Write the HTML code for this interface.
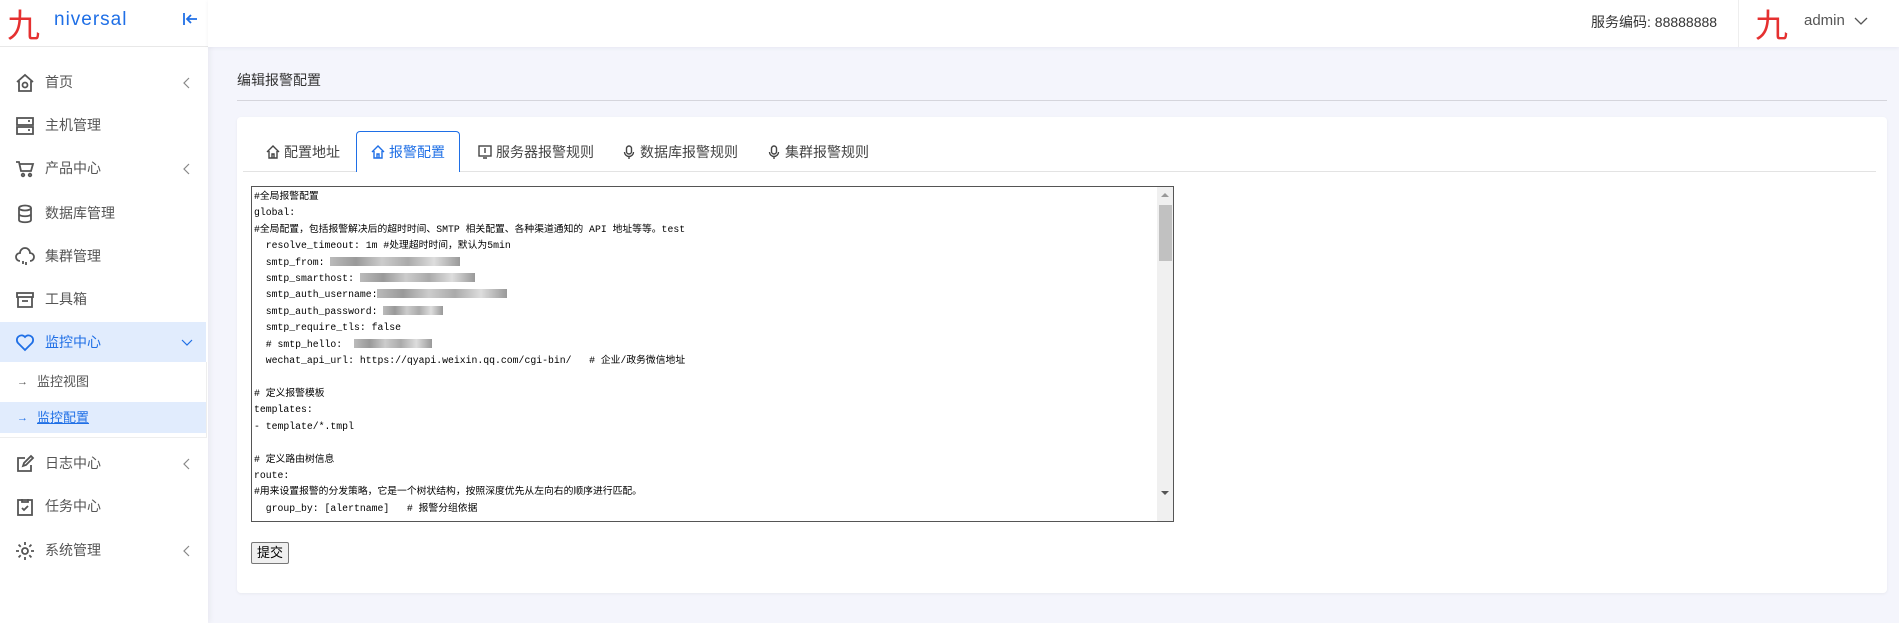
<!DOCTYPE html>
<html><head><meta charset="utf-8"><style>
*{margin:0;padding:0;box-sizing:border-box}
body{width:1899px;height:623px;overflow:hidden;background:#f4f5fc;font-family:"Liberation Sans","Noto Sans CJK SC",sans-serif;position:relative;color:#333}
.abs{position:absolute}
.side{left:0;top:0;width:208px;height:623px;background:#fff;box-shadow:2px 0 6px rgba(0,0,0,.05)}
.hdr{left:208px;top:0;width:1691px;height:47px;background:#fff;box-shadow:0 1px 4px rgba(0,0,60,.06)}
.logo{left:0;top:0;width:208px;height:47px;border-bottom:1px solid #e8e8e8}
.mi{position:absolute;left:0;width:208px;height:40px;font-size:14px;color:#555;line-height:40px}
.mi .t{position:absolute;left:45px}
.mi svg{position:absolute;left:15px;top:11px}
.mi svg.ch{left:182px;top:15px}
.tab{position:absolute;top:131px;height:40px;line-height:42px;font-size:14px;color:#444}
.tab svg{vertical-align:-2px;margin-right:4px}
.code{font-family:"Liberation Mono","Noto Sans CJK SC",monospace;font-size:9.8px;line-height:16.4px;white-space:pre;color:#000}
.bl{display:inline-block;height:9px;vertical-align:-1px;background:linear-gradient(90deg,#bbb,#999 20%,#ccc 40%,#aaa 60%,#ddd 80%,#999)}
</style></head><body>
<div class="abs side"></div>
<div class="abs logo">
 <span class="abs" style="left:7px;top:2px;font-size:33px;color:#e53030;font-family:'Noto Sans CJK SC';line-height:42px">九</span>
 <span class="abs" style="left:54px;top:9px;font-size:19px;color:#1f6fe6;letter-spacing:1px">niversal</span>
 <svg class="abs" style="left:182px;top:12px" width="18" height="14" viewBox="0 0 18 14"><path d="M2 1v12M15 7H5M9 3 5 7l4 4" stroke="#1f6fe6" stroke-width="1.8" fill="none"/></svg>
</div>
<div class="abs hdr"></div>
<div class="abs" style="left:1591px;top:12px;font-size:14px;color:#333">服务编码: 88888888</div>
<div class="abs" style="left:1738px;top:0;width:1px;height:47px;background:#eee"></div>
<div class="abs" style="left:1755px;top:2px;font-size:33px;color:#e53030;font-family:'Noto Sans CJK SC';line-height:42px">九</div>
<div class="abs" style="left:1804px;top:12px;font-size:15px;color:#555">admin</div>
<svg class="abs" style="left:1854px;top:17px" width="14" height="9" viewBox="0 0 14 9"><path d="M1 1l6 6 6-6" stroke="#555" stroke-width="1.3" fill="none"/></svg>

<div class="mi" style="top:62px"><svg width="20" height="20" viewBox="0 0 20 20" fill="none" stroke="#555" stroke-width="1.8"><path d="M2 9 10 2l8 7M4 8v10h12V8"/><circle cx="10" cy="12" r="2.5"/></svg><span class="t">首页</span><svg class="ch" width="8" height="12" viewBox="0 0 8 12"><path d="M7 1 2 6l5 5" stroke="#888" fill="none" stroke-width="1.2"/></svg></div>
<div class="mi" style="top:105px"><svg width="20" height="20" viewBox="0 0 20 20" fill="none" stroke="#555" stroke-width="1.8"><rect x="2" y="2" width="16" height="7"/><rect x="2" y="11" width="16" height="7"/><path d="M13 5h2M13 14h2"/></svg><span class="t">主机管理</span></div>
<div class="mi" style="top:148px"><svg width="20" height="20" viewBox="0 0 20 20" fill="none" stroke="#555" stroke-width="1.8"><path d="M1 3h3l2 9h10l2-7H5"/><circle cx="8" cy="16" r="1.3"/><circle cx="15" cy="16" r="1.3"/></svg><span class="t">产品中心</span><svg class="ch" width="8" height="12" viewBox="0 0 8 12"><path d="M7 1 2 6l5 5" stroke="#888" fill="none" stroke-width="1.2"/></svg></div>
<div class="mi" style="top:193px"><svg width="20" height="20" viewBox="0 0 20 20" fill="none" stroke="#555" stroke-width="1.8"><ellipse cx="10" cy="4" rx="6" ry="2.5"/><path d="M4 4v12c0 3 12 3 12 0V4M4 10c0 3 12 3 12 0"/></svg><span class="t">数据库管理</span></div>
<div class="mi" style="top:236px"><svg width="20" height="20" viewBox="0 0 20 20" fill="none" stroke="#555" stroke-width="1.8"><path d="M5 14a4 4 0 0 1 0-8 5 5 0 0 1 10 0 4 4 0 0 1 0 8M8 14v3M11 15v3"/></svg><span class="t">集群管理</span></div>
<div class="mi" style="top:279px"><svg width="20" height="20" viewBox="0 0 20 20" fill="none" stroke="#555" stroke-width="1.8"><rect x="2" y="3" width="16" height="4"/><path d="M3 7v10h14V7M7 11h6"/></svg><span class="t">工具箱</span></div>
<div class="abs" style="left:0;top:322px;width:206px;height:40px;background:#e1ecfd"></div>
<div class="mi" style="top:322px;color:#1f6fe6"><svg width="20" height="20" viewBox="0 0 20 20" fill="none" stroke="#1f6fe6" stroke-width="1.8"><path d="M10 17 3 10a4 4 0 0 1 7-6 4 4 0 0 1 7 6z"/></svg><span class="t">监控中心</span><svg style="left:181px;top:17px" width="12" height="8" viewBox="0 0 12 8"><path d="M1 1l5 5 5-5" stroke="#1f6fe6" fill="none" stroke-width="1.2"/></svg></div>
<div class="abs" style="left:206px;top:362px;width:1px;height:76px;background:#eee"></div>
<div class="abs" style="left:0;top:437px;width:207px;height:1px;background:#eee"></div>
<div class="mi" style="top:362px;font-size:13px"><span style="position:absolute;left:17px;font-size:11px">→</span><span class="t" style="left:37px">监控视图</span></div>
<div class="abs" style="left:0;top:402px;width:206px;height:31px;background:#e1ecfd"></div>
<div class="mi" style="top:398px;font-size:13px;color:#1f6fe6"><span style="position:absolute;left:17px;font-size:11px">→</span><span class="t" style="left:37px;text-decoration:underline">监控配置</span></div>
<div class="mi" style="top:443px"><svg width="20" height="20" viewBox="0 0 20 20" fill="none" stroke="#555" stroke-width="1.8"><path d="M16 11v6H3V4h7M8 12l1-3 7-7 2 2-7 7z"/></svg><span class="t">日志中心</span><svg class="ch" width="8" height="12" viewBox="0 0 8 12"><path d="M7 1 2 6l5 5" stroke="#888" fill="none" stroke-width="1.2"/></svg></div>
<div class="mi" style="top:486px"><svg width="20" height="20" viewBox="0 0 20 20" fill="none" stroke="#555" stroke-width="1.8"><rect x="3" y="3" width="14" height="15"/><path d="M7 2v3h6V2M7 11l2 2 4-4"/></svg><span class="t">任务中心</span></div>
<div class="mi" style="top:530px"><svg width="20" height="20" viewBox="0 0 20 20" fill="none" stroke="#555" stroke-width="1.8"><circle cx="10" cy="10" r="3"/><path d="M10 1v3M10 16v3M1 10h3M16 10h3M3.6 3.6l2.1 2.1M14.3 14.3l2.1 2.1M3.6 16.4l2.1-2.1M14.3 5.7l2.1-2.1"/></svg><span class="t">系统管理</span><svg class="ch" width="8" height="12" viewBox="0 0 8 12"><path d="M7 1 2 6l5 5" stroke="#888" fill="none" stroke-width="1.2"/></svg></div>

<div class="abs" style="left:237px;top:70px;font-size:14px;color:#333">编辑报警配置</div>
<div class="abs" style="left:237px;top:100px;width:1650px;height:1px;background:#d5d5dc"></div>
<div class="abs" style="left:237px;top:117px;width:1650px;height:476px;background:#fff;border-radius:4px;box-shadow:0 1px 3px rgba(0,0,0,.05)"></div>
<div class="abs" style="left:243px;top:171px;width:1633px;height:1px;background:#e3e3e3"></div>
<div class="abs" style="left:356px;top:131px;width:104px;height:41px;background:#fff;border:1px solid #1f6fe6;border-bottom:none;border-radius:4px 4px 0 0"></div>
<div class="tab" style="left:266px"><svg width="14" height="14" viewBox="0 0 14 14" fill="none" stroke="#444" stroke-width="1.4"><path d="M1 7 7 1l6 6M3 6v7h8V6M6 13V9h2v4"/></svg>配置地址</div>
<div class="tab" style="left:371px;color:#1f6fe6"><svg width="14" height="14" viewBox="0 0 14 14" fill="none" stroke="#1f6fe6" stroke-width="1.4"><path d="M1 7 7 1l6 6M3 6v7h8V6M6 13V9h2v4"/></svg>报警配置</div>
<div class="tab" style="left:478px"><svg width="14" height="14" viewBox="0 0 14 14" fill="none" stroke="#444" stroke-width="1.4"><rect x="1" y="1" width="12" height="10"/><path d="M7 3v5M5 13h4"/></svg>服务器报警规则</div>
<div class="tab" style="left:622px"><svg width="14" height="14" viewBox="0 0 14 14" fill="none" stroke="#444" stroke-width="1.4"><rect x="4.5" y="1" width="5" height="8" rx="2.5"/><path d="M2.5 7a4.5 4.5 0 0 0 9 0M7 11.5V14"/></svg>数据库报警规则</div>
<div class="tab" style="left:767px"><svg width="14" height="14" viewBox="0 0 14 14" fill="none" stroke="#444" stroke-width="1.4"><rect x="4.5" y="1" width="5" height="8" rx="2.5"/><path d="M2.5 7a4.5 4.5 0 0 0 9 0M7 11.5V14"/></svg>集群报警规则</div>

<div class="abs" style="left:251px;top:186px;width:923px;height:336px;border:1px solid #555;background:#fff;overflow:hidden">
 <div class="code" style="padding:2px 0 0 2px">#全局报警配置
global:
#全局配置，包括报警解决后的超时时间、SMTP 相关配置、各种渠道通知的 API 地址等等。test
  resolve_timeout: 1m #处理超时时间，默认为5min
  smtp_from: <span class="bl" style="width:130px"></span>
  smtp_smarthost: <span class="bl" style="width:115px"></span>
  smtp_auth_username:<span class="bl" style="width:130px"></span>
  smtp_auth_password: <span class="bl" style="width:60px"></span>
  smtp_require_tls: false
  # smtp_hello:  <span class="bl" style="width:78px"></span>
  wechat_api_url: https://qyapi.weixin.qq.com/cgi-bin/   # 企业/政务微信地址

# 定义报警模板
templates:
- template/*.tmpl

# 定义路由树信息
route:
#用来设置报警的分发策略，它是一个树状结构，按照深度优先从左向右的顺序进行匹配。
  group_by: [alertname]   # 报警分组依据</div>
 <div class="abs" style="right:0;top:0;width:16px;height:334px;background:#f0f0f0"></div>
 <div class="abs" style="right:1px;top:18px;width:13px;height:56px;background:#c1c1c1"></div>
 <div class="abs" style="right:4px;top:6px;width:0;height:0;border:4px solid transparent;border-bottom:4px solid #999;border-top:none"></div>
 <div class="abs" style="right:4px;top:304px;width:0;height:0;border:4px solid transparent;border-top:4px solid #555;border-bottom:none"></div>
</div>
<div class="abs" style="left:251px;top:542px;width:38px;height:22px;border:1px solid #777;background:#efefef;font-size:13px;line-height:20px;text-align:center;color:#000;border-radius:2px">提交</div>
</body></html>
